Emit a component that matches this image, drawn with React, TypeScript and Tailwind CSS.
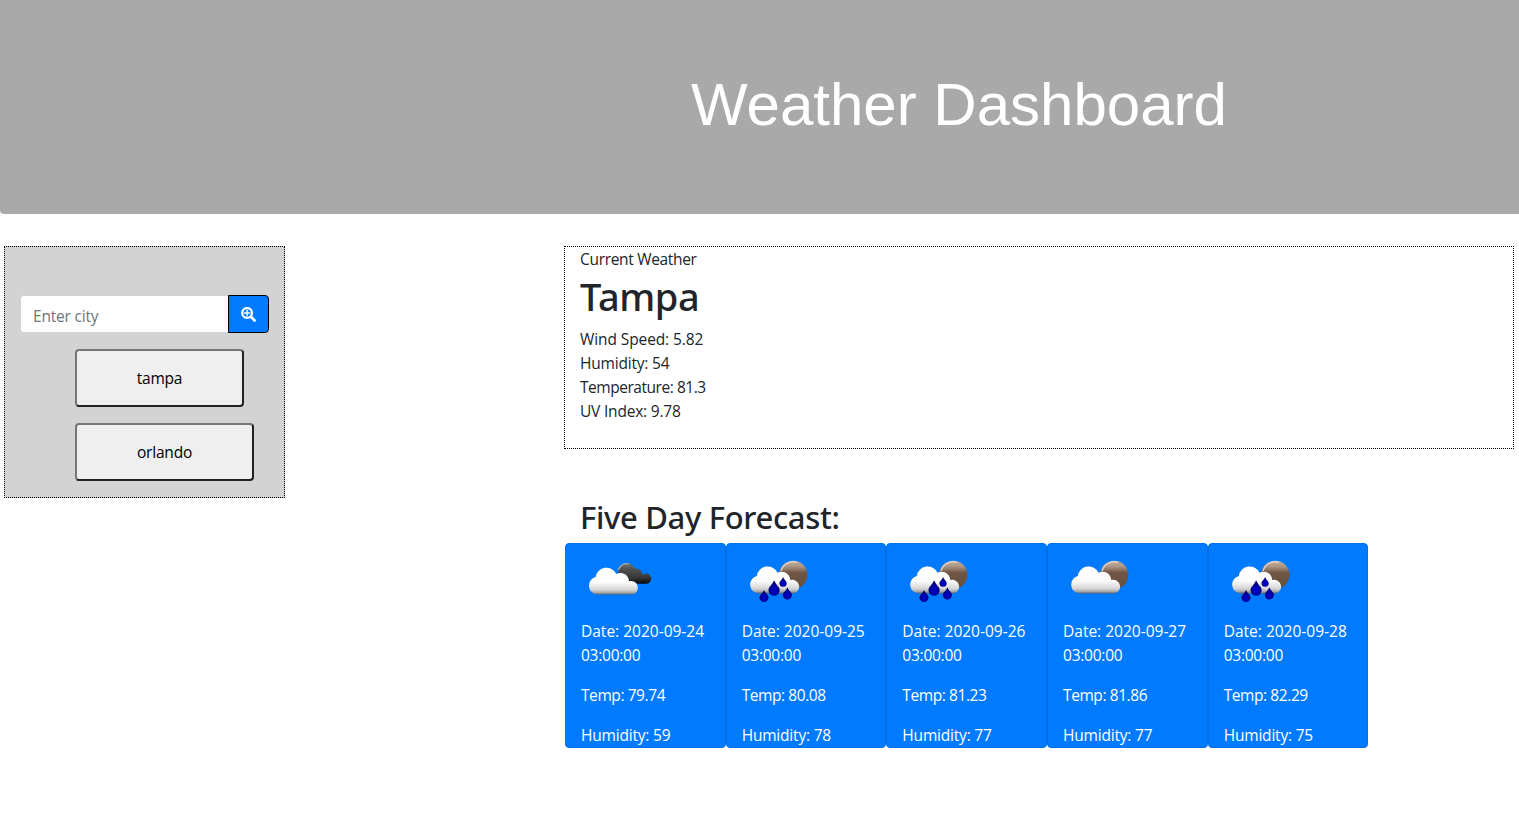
type IconKind = "clouds" | "rain" | "moon";

const forecast: { date: string; temp: string; humidity: string; icon: IconKind }[] = [
  { date: "2020-09-24", temp: "79.74", humidity: "59", icon: "clouds" },
  { date: "2020-09-25", temp: "80.08", humidity: "78", icon: "rain" },
  { date: "2020-09-26", temp: "81.23", humidity: "77", icon: "rain" },
  { date: "2020-09-27", temp: "81.86", humidity: "77", icon: "moon" },
  { date: "2020-09-28", temp: "82.29", humidity: "75", icon: "rain" },
];

function SearchPlusIcon() {
  return (
    <svg className="size-[15px]" viewBox="0 0 15 15" fill="none" stroke="currentColor">
      <circle cx="6.1" cy="6" r="4.9" strokeWidth="2.3" />
      <path d="M6.1 2.8V9.2M2.9 6H9.3" strokeWidth="1.4" />
      <path d="M9.9 9.8L13.6 13.5" strokeWidth="2.7" strokeLinecap="round" />
    </svg>
  );
}

function Drop({ x, y, r, h }: { x: number; y: number; r: number; h: number }) {
  const cy = y + h - r;
  return (
    <path
      d={`M${x} ${y}C${x + r * 0.3} ${y + h * 0.3} ${x + r} ${cy - r * 0.6} ${x + r} ${cy}A${r} ${r} 0 0 1 ${x - r} ${cy}C${x - r} ${cy - r * 0.6} ${x - r * 0.3} ${y + h * 0.3} ${x} ${y}Z`}
      fill="url(#drop)"
    />
  );
}

function WeatherIcon({ kind }: { kind: IconKind }) {
  return (
    <svg className="block h-[75px] w-20" viewBox="0 0 80 75">
      <defs>
        <linearGradient id="cloud" gradientUnits="userSpaceOnUse" x1="0" y1="21" x2="0" y2="50">
          <stop offset="0" stopColor="#fff" />
          <stop offset="0.55" stopColor="#fcfcfc" />
          <stop offset="0.82" stopColor="#d4d4d4" />
          <stop offset="0.91" stopColor="#aaa" />
          <stop offset="1" stopColor="#4b525a" />
        </linearGradient>
        <linearGradient id="dark" gradientUnits="userSpaceOnUse" x1="0" y1="19" x2="0" y2="40">
          <stop offset="0" stopColor="#777" />
          <stop offset="0.3" stopColor="#505050" />
          <stop offset="0.7" stopColor="#373737" />
          <stop offset="1" stopColor="#050505" />
        </linearGradient>
        <linearGradient id="moon" x1="0" y1="0" x2="0" y2="1">
          <stop offset="0" stopColor="#c4b09f" />
          <stop offset="0.22" stopColor="#aa9280" />
          <stop offset="0.42" stopColor="#705543" />
          <stop offset="1" stopColor="#65503f" />
        </linearGradient>
        <radialGradient id="drop" cx="0.5" cy="0.65" r="0.6">
          <stop offset="0" stopColor="#0000dc" />
          <stop offset="0.5" stopColor="#0000a8" />
          <stop offset="1" stopColor="#00004c" />
        </radialGradient>
      </defs>
      {kind === "clouds" ? (
        <g>
          <path
            d="M37 28A9 9 0 0 1 54 24.5A6.6 6.6 0 0 1 61.5 31A5.1 5.1 0 1 1 65.5 39.7H45Q37 39 37 28Z"
            fill="url(#dark)"
          />
          <path d="M37.5 26A8.4 8.4 0 0 1 48 19.9" fill="none" stroke="#aaa" strokeWidth="1.2" />
        </g>
      ) : (
        <g>
          <circle cx="51.2" cy="30.9" r="14.2" fill="url(#moon)" />
          <path d="M39 27A13 13 0 0 1 55 18.3" fill="none" stroke="#ded2c8" strokeWidth="1.3" />
        </g>
      )}
      <path
        transform={kind === "clouds" ? "translate(-0.2 1.2)" : undefined}
        d="M16.5 49.4A8.9 8.9 0 0 1 14.8 31.9A10.9 10.9 0 0 1 35.5 28.8A8.6 8.6 0 0 1 48.2 36A6.9 6.9 0 1 1 51.4 49.4Z"
        fill="url(#cloud)"
      />
      {kind === "rain" && (
        <g>
          <Drop x={32.1} y={36.3} r={5.6} h={15.5} />
          <Drop x={41.1} y={33} r={3.6} h={9.8} />
          <Drop x={22} y={46} r={4.5} h={12} />
          <Drop x={45.4} y={43.2} r={4.5} h={12.3} />
        </g>
      )}
    </svg>
  );
}

export default function App() {
  return (
    <div className="min-h-[825px] bg-white font-['Open_Sans',sans-serif] text-[15.5px] leading-6 tracking-[-0.2px] text-[#212529]">
      <header className="mb-8 h-[214px] rounded-bl-[4px] bg-[#a9a9a9] pt-[69px] pl-[691px]">
        <h1 className="font-['Liberation_Sans',Arial,sans-serif] text-[60px] leading-[72px] tracking-normal text-white">
          Weather Dashboard
        </h1>
      </header>

      <main className="flex items-start pl-1">
        <aside className="h-[252px] w-[281px] border border-dotted border-black bg-[#d3d3d3] px-[15px] pt-12">
          <div className="flex h-[38px]">
            <input
              placeholder="Enter city"
              className="w-[208px] rounded-l border border-r-0 border-[#ced4da] bg-white px-3 pt-[3px] placeholder:text-[#6c757d]"
            />
            <button className="flex w-[41px] items-center justify-center rounded-r border border-black bg-[#007bff] pt-px text-white">
              <SearchPlusIcon />
            </button>
          </div>
          <div className="mt-4 ml-[55px] flex flex-col items-start gap-4 text-black">
            <button className="h-[58px] w-[169px] rounded border-2 border-t-[#767676] border-r-[#212121] border-b-[#212121] border-l-[#767676] bg-[#efefef]">
              tampa
            </button>
            <button className="h-[58px] w-[179px] rounded border-2 border-t-[#767676] border-r-[#212121] border-b-[#212121] border-l-[#767676] bg-[#efefef]">
              orlando
            </button>
          </div>
        </aside>

        <div className="ml-[279px] w-[950px]">
          <section className="h-[203px] border border-dotted border-black px-[15px]">
            <p className="tracking-[-0.32px]">Current Weather</p>
            <h2 className="mb-[7px] pt-px font-['Noto_Sans',sans-serif] text-[38px] leading-[48px] font-medium tracking-[-0.4px]">
              Tampa
            </h2>
            <p className="tracking-[-0.1px]">Wind Speed: 5.82</p>
            <p>Humidity: 54</p>
            <p className="tracking-[-0.46px]">Temperature: 81.3</p>
            <p className="tracking-[-0.2px]">UV Index: 9.78</p>
          </section>

          <section className="mt-[49px] pl-px">
            <h2 className="mb-[7px] pl-[15px] font-['Noto_Sans',sans-serif] text-[31px] leading-[38px] font-medium tracking-[-0.34px]">
              Five Day Forecast:
            </h2>
            <div className="grid w-[803.4px] grid-cols-5 text-white">
              {forecast.map((day) => (
                <article
                  key={day.date}
                  className="h-[205px] rounded border border-[#006fe6] bg-[#007bff] pl-[15px]"
                >
                  <WeatherIcon kind={day.icon} />
                  <p className="mb-4">
                    <span className="tracking-[0px]">Date: {day.date}</span>
                    <br />
                    <span className="tracking-[-0.25px]">03:00:00</span>
                  </p>
                  <p className="mb-4 tracking-[-0.42px]">Temp: {day.temp}</p>
                  <p>Humidity: {day.humidity}</p>
                </article>
              ))}
            </div>
          </section>
        </div>
      </main>
    </div>
  );
}
